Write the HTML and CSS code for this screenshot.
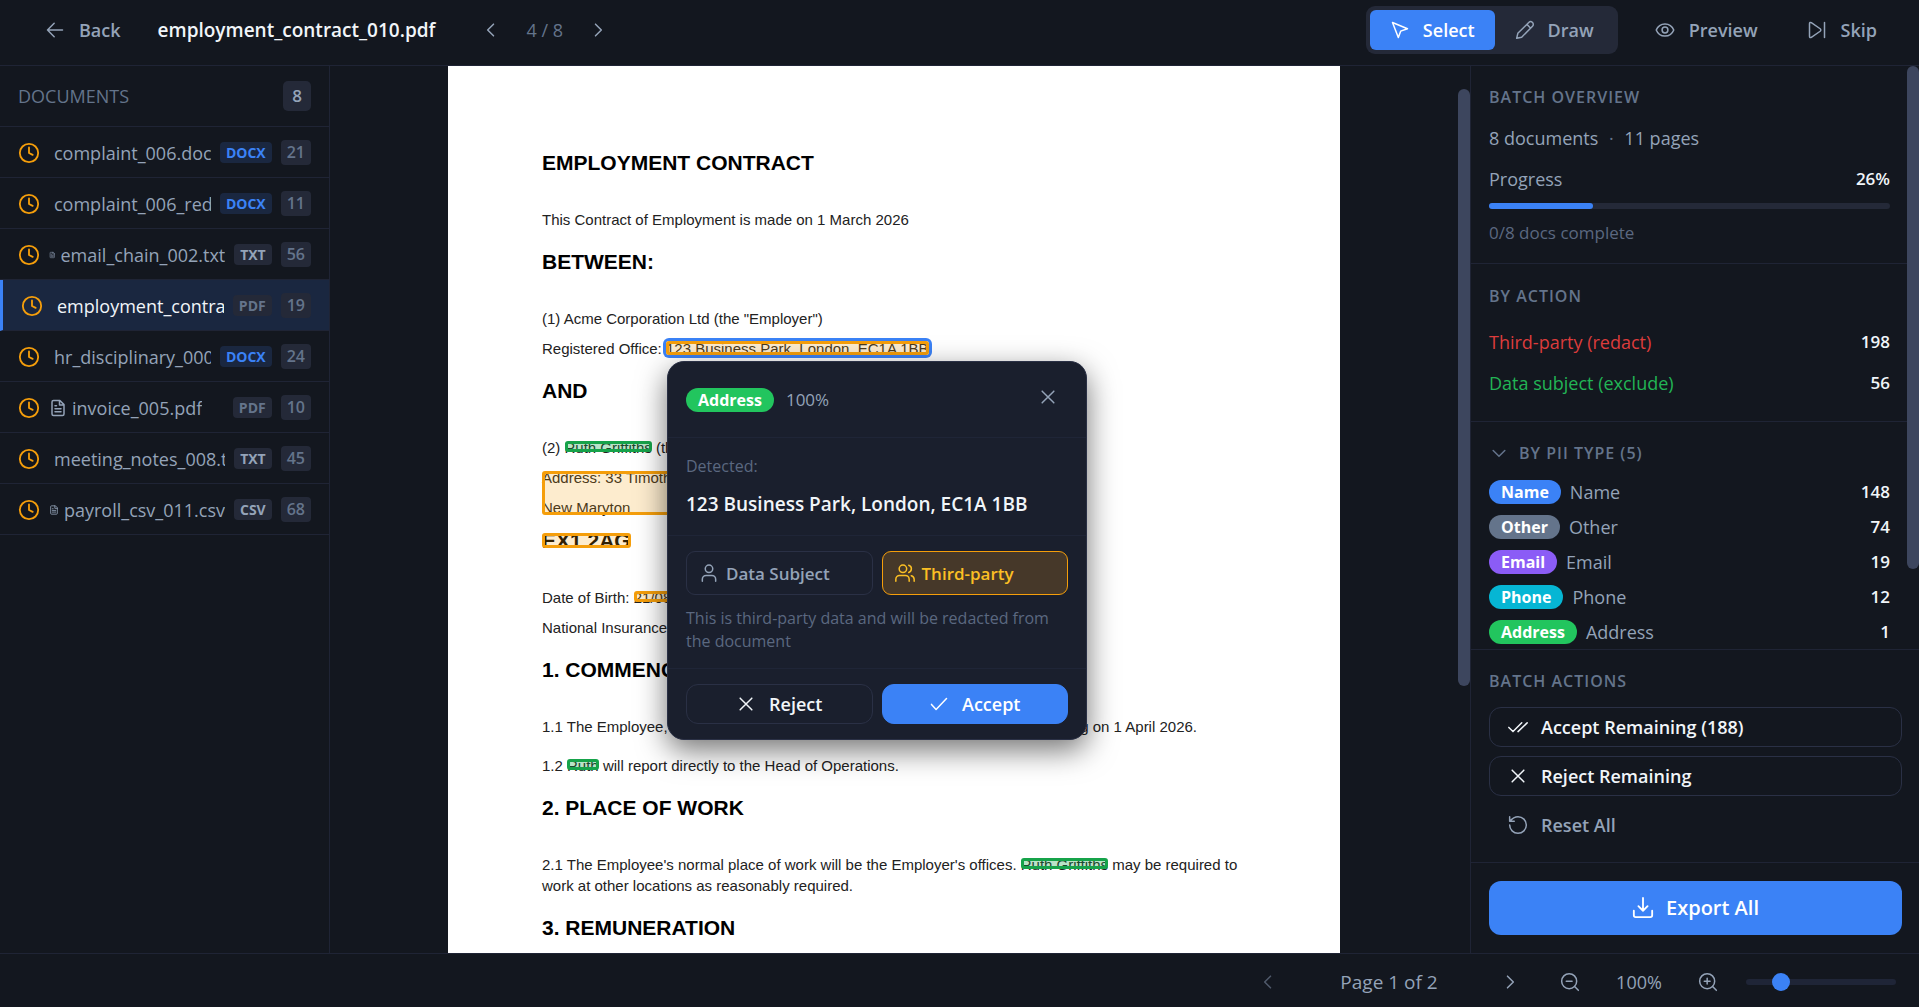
FILE: index.html
```html
<!DOCTYPE html>
<html lang="en">

<head>
    <meta charset="UTF-8">
    <meta name="viewport" content="width=device-width, initial-scale=1.0">
    <title>employment_contract_010.pdf</title>
    <link rel="stylesheet" href="styles.css">
</head>

<body>
    <!-- shared icons -->
    <svg class="sprite" aria-hidden="true">
        <symbol id="i-left" viewBox="0 0 24 24"><path d="M15 5l-7 7 7 7" /></symbol>
        <symbol id="i-right" viewBox="0 0 24 24"><path d="M9 5l7 7-7 7" /></symbol>
        <symbol id="i-x" viewBox="0 0 24 24"><path d="M5 5l14 14M19 5L5 19" /></symbol>
        <symbol id="i-clock" viewBox="0 0 24 24"><circle cx="12" cy="12" r="10" /><path d="M12 6v6l4 2" /></symbol>
        <symbol id="i-file" viewBox="0 0 24 24"><path d="M14.5 2H6a2 2 0 0 0-2 2v16a2 2 0 0 0 2 2h12a2 2 0 0 0 2-2V7.500zM14 2v6h6M8 9h2M8 13h8M8 17h8" /></symbol>
    </svg>

    <div class="app">
        <header class="topbar">
            <button class="btn-plain back"><svg class="icon" viewBox="0 0 24 24"><path d="M11 4l-8 8 8 8M3 12h18" /></svg>Back</button>
            <h1 class="filename">employment_contract_010.pdf</h1>
            <nav class="doc-nav">
                <button class="btn-icon" aria-label="Previous document"><svg class="icon"><use href="#i-left" /></svg></button>
                <span>4 / 8</span>
                <button class="btn-icon" aria-label="Next document"><svg class="icon"><use href="#i-right" /></svg></button>
            </nav>
            <div class="tools">
                <button class="tool active"><svg class="icon" viewBox="0 0 24 24"><path d="M3 3l7 18 2.800-7.600L21 10.500z" /></svg>Select</button>
                <button class="tool"><svg class="icon" viewBox="0 0 24 24"><path d="M2 22l1.400-6L16.500 3a3 3 0 0 1 4.500 4.500L8 20.600zM14.500 5.500l4 4" /></svg>Draw</button>
            </div>
            <button class="btn-plain preview"><svg class="icon" viewBox="0 0 24 24"><path d="M1.500 12C3.500 7 7.400 4.700 12 4.700S20.500 7 22.500 12c-2 5-5.900 7.300-10.500 7.300S3.500 17 1.500 12z" /><circle cx="12" cy="12" r="3.500" /></svg>Preview</button>
            <button class="btn-plain skip"><svg class="icon" viewBox="0 0 24 24"><path d="M3 4.500v15c0 1.500 1 2 2.200 1.300l10.600-7.300c1-.8 1-2.200 0-3L5.200 3.200C4 2.500 3 3 3 4.500zM21 3v18" /></svg>Skip</button>
        </header>

        <div class="content">
            <!-- document list -->
            <aside class="sidebar">
                <div class="sidebar-head">
                    <h2 class="label">DOCUMENTS</h2>
                    <span class="total">8</span>
                </div>
                <ul class="docs">
                    <li><a href="#"><svg class="clock"><use href="#i-clock" /></svg><span class="name"><svg class="file"><use href="#i-file" /></svg><span>complaint_006.docx</span></span><em class="ext docx">DOCX</em><b class="count">21</b></a></li>
                    <li><a href="#"><svg class="clock"><use href="#i-clock" /></svg><span class="name"><svg class="file"><use href="#i-file" /></svg><span>complaint_006_redacted.docx</span></span><em class="ext docx">DOCX</em><b class="count">11</b></a></li>
                    <li><a href="#"><svg class="clock"><use href="#i-clock" /></svg><span class="name"><svg class="file"><use href="#i-file" /></svg><span>email_chain_002.txt</span></span><em class="ext">TXT</em><b class="count">56</b></a></li>
                    <li class="active"><a href="#"><svg class="clock"><use href="#i-clock" /></svg><span class="name"><svg class="file"><use href="#i-file" /></svg><span>employment_contract_010.pdf</span></span><em class="ext pdf">PDF</em><b class="count">19</b></a></li>
                    <li><a href="#"><svg class="clock"><use href="#i-clock" /></svg><span class="name"><svg class="file"><use href="#i-file" /></svg><span>hr_disciplinary_000.docx</span></span><em class="ext docx">DOCX</em><b class="count">24</b></a></li>
                    <li><a href="#"><svg class="clock"><use href="#i-clock" /></svg><span class="name"><svg class="file"><use href="#i-file" /></svg><span>invoice_005.pdf</span></span><em class="ext pdf">PDF</em><b class="count">10</b></a></li>
                    <li><a href="#"><svg class="clock"><use href="#i-clock" /></svg><span class="name"><svg class="file"><use href="#i-file" /></svg><span>meeting_notes_008.txt</span></span><em class="ext">TXT</em><b class="count">45</b></a></li>
                    <li><a href="#"><svg class="clock"><use href="#i-clock" /></svg><span class="name"><svg class="file"><use href="#i-file" /></svg><span>payroll_csv_011.csv</span></span><em class="ext">CSV</em><b class="count">68</b></a></li>
                </ul>
            </aside>

            <!-- page viewer -->
            <main class="viewer">
                <article class="page">
                    <h3>EMPLOYMENT CONTRACT</h3>
                    <p>This Contract of Employment is made on 1 March 2026</p>
                    <h3>BETWEEN:</h3>
                    <p>(1) Acme Corporation Ltd (the "Employer")</p>
                    <p>Registered Office: <span class="mark tall selected">123 Business Park, London, EC1A 1BB</span></p>
                    <h3>AND</h3>
                    <p>(2) <span class="mark subject">Ruth Griffiths</span> (the "Employee")</p>
                    <div class="mark block">
                        <p>Address: 33 Timothy</p>
                        <p>New Maryton</p>
                    </div>
                    <h3 class="postcode"><span class="mark big">EX1 2AG</span></h3>
                    <p>Date of Birth: <span class="mark">21/08/1985</span></p>
                    <p>National Insurance</p>
                    <h3>1. COMMENCEMENT</h3>
                    <p class="clause split"><span>1.1 The Employee,</span><span>starting on 1 April 2026.</span></p>
                    <p class="clause">1.2 <span class="mark subject">Ruth</span> will report directly to the Head of Operations.</p>
                    <h3>2. PLACE OF WORK</h3>
                    <p>2.1 The Employee's normal place of work will be the Employer's offices. <span class="mark subject">Ruth Griffiths</span> may be required to work at other locations as reasonably required.</p>
                    <h3>3. REMUNERATION</h3>

                    <!-- detection popover -->
                    <section class="popover">
                        <div class="pop-head">
                            <span class="pill green">Address</span>
                            <span class="score">100%</span>
                            <button class="btn-icon close" aria-label="Close"><svg class="icon"><use href="#i-x" /></svg></button>
                        </div>
                        <div class="pop-text">
                            <span>Detected:</span>
                            <strong>123 Business Park, London, EC1A 1BB</strong>
                        </div>
                        <div class="pop-kind">
                            <div class="pair">
                                <button class="kind"><svg class="icon" viewBox="0 0 24 24"><circle cx="12" cy="7" r="4.500" /><path d="M4 22v-2.500a4.500 4.500 0 0 1 4.500-4.500h7a4.500 4.500 0 0 1 4.500 4.500V22" /></svg>Data Subject</button>
                                <button class="kind active"><svg class="icon" viewBox="0 0 24 24"><circle cx="9.500" cy="7" r="4.500" /><path d="M1 22v-2.500A4.500 4.500 0 0 1 5.500 15h7a4.500 4.500 0 0 1 4.500 4.500V22M16.500 2.700a4.500 4.500 0 0 1 0 8.600M19.500 15.300a4.500 4.500 0 0 1 3.500 4.200V22" /></svg>Third-party</button>
                            </div>
                            <p>This is third-party data and will be redacted from the document</p>
                        </div>
                        <div class="pair pop-foot">
                            <button class="btn"><svg class="icon"><use href="#i-x" /></svg>Reject</button>
                            <button class="btn primary"><svg class="icon" viewBox="0 0 24 24"><path d="M3 12.500l5.500 6L21 5.500" /></svg>Accept</button>
                        </div>
                    </section>
                </article>
                <i class="thumb"></i>
            </main>

            <!-- batch panel -->
            <aside class="panel">
                <div class="panel-scroll">
                    <section class="overview">
                        <h2 class="label">BATCH OVERVIEW</h2>
                        <p class="summary">8 documents <i>·</i> 11 pages</p>
                        <div class="row"><span>Progress</span><b>26%</b></div>
                        <div class="progress"><i style="width: 26%"></i></div>
                        <p class="muted">0/8 docs complete</p>
                    </section>
                    <section class="by-action">
                        <h2 class="label">BY ACTION</h2>
                        <div class="row red-text"><span>Third-party (redact)</span><b>198</b></div>
                        <div class="row green-text"><span>Data subject (exclude)</span><b>56</b></div>
                    </section>
                    <section class="by-type">
                        <h2 class="label"><button><svg class="icon" viewBox="0 0 24 24"><path d="M5 9l7 7 7-7" /></svg>BY PII TYPE (5)</button></h2>
                        <div class="row"><span class="pill blue">Name</span><span>Name</span><b>148</b></div>
                        <div class="row"><span class="pill gray">Other</span><span>Other</span><b>74</b></div>
                        <div class="row"><span class="pill purple">Email</span><span>Email</span><b>19</b></div>
                        <div class="row"><span class="pill cyan">Phone</span><span>Phone</span><b>12</b></div>
                        <div class="row"><span class="pill green">Address</span><span>Address</span><b>1</b></div>
                    </section>
                    <i class="thumb"></i>
                </div>
                <section class="actions">
                    <h2 class="label">BATCH ACTIONS</h2>
                    <button class="btn"><svg class="icon" viewBox="0 0 24 24"><path d="M1 12.500l5 5L16.500 7M12 17.500L23 7" /></svg>Accept Remaining (188)</button>
                    <button class="btn"><svg class="icon"><use href="#i-x" /></svg>Reject Remaining</button>
                    <button class="btn ghost"><svg class="icon" viewBox="0 0 24 24"><path d="M2 12a10 10 0 1 0 10-10C8.500 2 5.500 3.500 2 7.500M2 2v5.500h5.500" /></svg>Reset All</button>
                </section>
                <section class="export">
                    <button><svg class="icon large" viewBox="0 0 24 24"><path d="M2 15v5a2 2 0 0 0 2 2h16a2 2 0 0 0 2-2v-5M7 10l5 5 5-5M12 1v14" /></svg>Export All</button>
                </section>
            </aside>
        </div>

        <footer class="bottombar">
            <button class="btn-icon" aria-label="Previous page" disabled><svg class="icon"><use href="#i-left" /></svg></button>
            <span class="page-no">Page 1 of 2</span>
            <button class="btn-icon next" aria-label="Next page"><svg class="icon"><use href="#i-right" /></svg></button>
            <button class="btn-icon" aria-label="Zoom out"><svg class="icon" viewBox="0 0 24 24"><circle cx="11" cy="11" r="9" /><path d="M17.500 17.500L22 22M7.500 11h7" /></svg></button>
            <label class="zoom-value" for="zoom">100%</label>
            <button class="btn-icon" aria-label="Zoom in"><svg class="icon" viewBox="0 0 24 24"><circle cx="11" cy="11" r="9" /><path d="M17.500 17.500L22 22M7.500 11h7M11 7.500v7" /></svg></button>
            <input type="range" id="zoom" min="50" max="300" value="100">
        </footer>
    </div>
</body>

</html>
```

FILE: styles.css
```css
*,
*::after {
    box-sizing: border-box;
    margin: 0;
    padding: 0;
}

body {
    background-color: #13171f;
    color: #94a3b8;
    font-family: "Segoe UI", "Open Sans", "Noto Sans", sans-serif;
    font-size: 18px;
    line-height: 24px;
}

ul {
    list-style: none;
}

a {
    color: inherit;
    text-decoration: none;
}

button {
    font: inherit;
    font-weight: 600;
    color: inherit;
    background: none;
    border: 0;
    cursor: pointer;
    display: flex;
    align-items: center;
    white-space: nowrap;
}

b {
    font-weight: 600;
    color: #f1f5f9;
}

.sprite {
    display: none;
}

.icon,
.clock,
.file {
    fill: none;
    stroke: currentColor;
    stroke-width: 1.8;
    stroke-linecap: round;
    stroke-linejoin: round;
    flex: none;
}

.icon {
    width: 20px;
    height: 20px;
}

.icon.large {
    width: 22px;
    height: 22px;
    stroke-width: 2;
}

.label {
    font-size: 16px;
    font-weight: 600;
    letter-spacing: 1px;
    color: #64748b;
}

.app {
    height: 100vh;
    display: flex;
    flex-direction: column;
}

/* top bar */
.topbar {
    flex: none;
    height: 66px;
    padding: 0 42px 6px 45px;
    display: flex;
    align-items: center;
    border-bottom: 1px solid #1f2435;
}

.btn-plain {
    gap: 14px;
}

.filename {
    margin-left: 37px;
    font-size: 19px;
    font-weight: 600;
    color: #f1f5f9;
}

.doc-nav {
    margin-left: 36px;
    display: flex;
    align-items: center;
    gap: 15px;
    color: #64748b;
}

.btn-icon {
    width: 40px;
    height: 40px;
    justify-content: center;
    color: #94a3b8;
}

.tools {
    margin-left: auto;
    padding: 4px;
    display: flex;
    border-radius: 9px;
    background-color: #242938;
}

.tool {
    height: 40px;
    padding: 0 20px;
    gap: 13px;
    border-radius: 6px;
}

.tool.active {
    background-color: #3b82f6;
    color: #fff;
}

.preview {
    margin-left: 37px;
}

.skip {
    margin-left: 49px;
}

.content {
    flex: 1;
    min-height: 0;
    display: flex;
}

/* sidebar */
.sidebar {
    flex: none;
    width: 330px;
    border-right: 1px solid #1f2435;
}

.sidebar-head {
    height: 61px;
    padding: 0 18px;
    display: flex;
    align-items: center;
    justify-content: space-between;
    border-bottom: 1px solid #1f2435;
}

.sidebar-head .label {
    letter-spacing: 0;
    font-size: 18px;
    font-weight: 500;
}

.total {
    padding: 3px 9px;
    border-radius: 5px;
    background-color: #242938;
    font-size: 17px;
    font-weight: 600;
}

.docs li {
    border-bottom: 1px solid #1f2435;
}

.docs a {
    height: 50px;
    padding: 1px 18px 0;
    display: flex;
    align-items: center;
    gap: 9px;
}

.docs .active {
    background-color: #1a2740;
    border-left: 3px solid #3b82f6;
}

.docs .active .name {
    color: #f1f5f9;
}

.clock {
    width: 22px;
    height: 22px;
    color: #f59e0b;
    stroke-width: 2;
}

.name {
    flex: 1;
    min-width: 0;
    display: flex;
    align-items: center;
    gap: 5px;
    overflow: hidden;
    white-space: nowrap;
}

.name span {
    min-width: 0;
    overflow: hidden;
}

.file {
    flex: 0 1000 18px;
    width: 18px;
    min-width: 0;
    height: 18px;
    stroke-width: 2;
}

.ext {
    padding: 0 6px;
    border-radius: 4px;
    background-color: #242938;
    font-size: 14px;
    font-style: normal;
    font-weight: 700;
    line-height: 21px;
}

.ext.docx {
    background-color: #1a2740;
    color: #3b82f6;
}

.ext.pdf {
    color: #64748b;
}

.count {
    padding: 0 6px;
    border-radius: 4px;
    background-color: #242938;
    color: #64748b;
    font-size: 16px;
    line-height: 25px;
}

/* viewer */
.viewer {
    flex: 1;
    min-width: 0;
    padding-right: 12px;
    position: relative;
    overflow: hidden;
}

.thumb {
    position: absolute;
    top: 0;
    right: 0;
    width: 12px;
    height: 503px;
    border-radius: 6px;
    background-color: #3d465e;
}

.viewer > .thumb {
    top: 23px;
    height: 597px;
}

.page {
    position: relative;
    width: 892px;
    min-height: 1262px;
    margin: 0 auto;
    padding: 85px 94px;
    background-color: #fff;
    color: #222;
    font-family: Arial, "Liberation Sans", sans-serif;
    font-size: 15px;
    line-height: 21px;
}

.page h3 {
    margin: 20px 0 34px;
    font-size: 21px;
    line-height: 24px;
    color: #000;
}

.page h3:first-child {
    margin-top: 0;
}

.page h3.postcode {
    margin-top: 11px;
}

.page > p,
.block p {
    margin-bottom: 9px;
}

.block p:last-child,
.page > p:has(+ h3) {
    margin-bottom: 0;
}

.page > .clause + .clause {
    margin-top: 18px;
}

.page .split {
    width: 655px;
    display: flex;
    justify-content: space-between;
}

.mark {
    position: relative;
}

.mark::after {
    content: "";
    position: absolute;
    left: 0;
    right: 0;
    top: 2px;
    height: 11px;
    border: 3px solid #f59e0b;
    border-radius: 3px;
    background-color: rgba(245, 158, 11, 0.2);
}

.mark.subject::after {
    border-color: #16a34a;
    background-color: rgba(22, 163, 74, 0.3);
}

.mark.tall::after {
    top: 1px;
    height: 14px;
}

.mark.selected::after {
    box-shadow: 0 0 0 3px #3b82f6;
}

.mark.big::after {
    top: 4px;
    height: 15px;
}

.mark.block::after {
    right: 300px;
    top: 4px;
    height: 44px;
}

/* popover */
.popover {
    position: absolute;
    left: 219px;
    top: 295px;
    z-index: 10;
    width: 420px;
    border: 1px solid #2a3045;
    border-radius: 17px;
    background-color: #1a1f2d;
    box-shadow: 0 10px 30px rgba(0, 0, 0, 0.55);
    color: #94a3b8;
    font-family: "Segoe UI", "Open Sans", "Noto Sans", sans-serif;
    font-size: 16px;
    line-height: 23px;
}

.popover > div {
    padding: 15px 18px;
    border-bottom: 1px solid #1f2537;
}

.popover .pop-head {
    height: 76px;
    display: flex;
    align-items: center;
    gap: 12px;
}

.score {
    font-size: 17px;
    font-weight: 500;
}

.close {
    margin-left: auto;
    align-self: flex-start;
}

.popover .pop-text {
    height: 98px;
    padding-top: 17px;
    display: flex;
    flex-direction: column;
    gap: 14px;
    color: #5b6880;
}

.pop-text strong {
    font-size: 19px;
    font-weight: 600;
    line-height: 24px;
    color: #f1f5f9;
}

.popover .pop-kind {
    color: #5b6880;
}

.pop-kind p {
    margin-top: 12px;
}

.pair {
    display: grid;
    grid-template-columns: 1fr 1fr;
    gap: 9px;
}

.popover .pop-foot {
    border-bottom: 0;
}

.kind {
    height: 44px;
    padding: 0 12px;
    gap: 7px;
    border: 1px solid #2a3045;
    border-radius: 9px;
    color: #94a3b8;
    font-size: 17px;
}

.kind.active {
    border-color: #f59e0b;
    background-color: #463829;
    color: #fbbf24;
}

.btn {
    height: 40px;
    padding: 0 18px;
    gap: 13px;
    border: 1px solid #2a3045;
    border-radius: 12px;
    color: #f1f5f9;
    font-size: 18px;
}

.pop-foot .btn {
    justify-content: center;
}

.btn.primary {
    border-color: #3b82f6;
    background-color: #3b82f6;
    color: #fff;
}

.btn.ghost {
    border-color: transparent;
    color: #94a3b8;
}

.pill {
    padding: 0 12px;
    border-radius: 12px;
    color: #fff;
    font-size: 16px;
    font-weight: 700;
    line-height: 24px;
}

.blue {
    background-color: #3b82f6;
}

.gray {
    background-color: #64748b;
}

.purple {
    background-color: #8b5cf6;
}

.cyan {
    background-color: #06b6d4;
}

.green {
    background-color: #22c55e;
}

/* batch panel */
.panel {
    flex: none;
    width: 449px;
    display: flex;
    flex-direction: column;
    border-left: 1px solid #1f2435;
}

.panel-scroll {
    flex: 1;
    min-height: 0;
    position: relative;
    padding-right: 11px;
    overflow: hidden;
}

.panel section {
    padding: 19px 18px 18px;
    border-bottom: 1px solid #1f2435;
}

.row {
    display: flex;
    align-items: center;
    gap: 9px;
}

.row b {
    margin-left: auto;
    font-size: 17px;
}

.summary {
    margin: 17px 0;
}

.summary i {
    margin: 0 6px;
    font-style: normal;
    color: #64748b;
}

.progress {
    height: 6px;
    margin: 12px 0;
    border-radius: 3px;
    background-color: #242938;
}

.progress i {
    display: block;
    height: 6px;
    border-radius: 3px;
    background-color: #3b82f6;
}

.muted {
    font-size: 17px;
    color: #5b6880;
}

.panel .by-action {
    padding: 20px 18px 26px;
}

.by-action .label {
    margin-bottom: 22px;
}

.by-action .row + .row {
    margin-top: 17px;
}

.red-text {
    color: #dc3c3c;
}

.green-text {
    color: #22b455;
}

.by-type .label {
    margin-bottom: 15px;
}

.by-type .label button {
    gap: 10px;
    letter-spacing: inherit;
}

.by-type .row {
    margin-bottom: 11px;
}

.panel .actions {
    padding: 19px 17px 17px 18px;
    display: flex;
    flex-direction: column;
    gap: 9px;
    border-top: 1px solid #1f2435;
}

.actions .label {
    margin-bottom: 5px;
}

.panel .export {
    padding: 18px 17px 18px 18px;
    border-bottom: 0;
}

.export button {
    width: 100%;
    height: 54px;
    justify-content: center;
    gap: 12px;
    border-radius: 12px;
    background-color: #3b82f6;
    color: #fff;
    font-size: 20px;
}

/* bottom bar */
.bottombar {
    flex: none;
    height: 54px;
    padding: 2px 23px 0;
    display: flex;
    align-items: center;
    justify-content: flex-end;
    gap: 10px;
    border-top: 1px solid #1f2435;
}

.bottombar button:disabled {
    color: #505a6b;
}

.page-no {
    width: 182px;
    font-size: 19px;
    text-align: center;
}

.bottombar .next {
    margin-right: 10px;
}

.zoom-value {
    width: 78px;
    text-align: center;
    font-weight: 500;
}

#zoom {
    appearance: none;
    width: 150px;
    height: 6px;
    margin-left: 8px;
    border-radius: 3px;
    background-color: #1f2537;
}

#zoom::-webkit-slider-thumb {
    appearance: none;
    width: 18px;
    height: 18px;
    border-radius: 50%;
    background-color: #3b82f6;
}
```
